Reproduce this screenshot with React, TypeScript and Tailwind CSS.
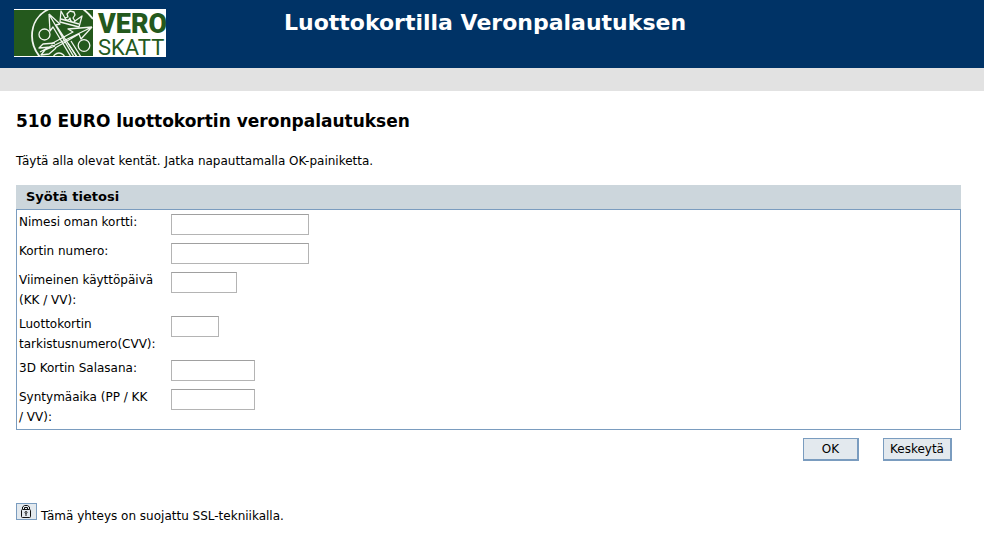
const fields = [
  { id: "name", lines: ["Nimesi oman kortti:"], width: "w-[138px]" },
  { id: "number", lines: ["Kortin numero:"], width: "w-[138px]" },
  { id: "expiry", lines: ["Viimeinen käyttöpäivä", "(KK / VV):"], width: "w-[66px]" },
  { id: "check", lines: ["Luottokortin", "tarkistusnumero(CVV):"], width: "w-12" },
  { id: "secure", lines: ["3D Kortin Salasana:"], width: "w-21" },
  { id: "birth", lines: ["Syntymäaika (PP / KK", "/ VV):"], width: "w-21" },
];

const Logo = () => {
  return (
    <svg width="152" height="48" viewBox="0 0 152 48" role="img" aria-label="Vero Skatt">
      <rect width="152" height="48" fill="#fff" />
      <rect y="1" width="79" height="46" fill="#24591d" />
      <svg x="0" y="1" width="79" height="46" viewBox="0 1 79 46">
        <g fill="none" stroke="#f1f5ef" strokeWidth="1.3" strokeLinejoin="round">
          <path d="M35 0C24 5 18 15 18 27C18 35 21 42 26 48" strokeWidth="1.8" />
          <path d="M69 0C73 3 76 6 79 10" strokeWidth="1.8" />
          <circle cx="30.5" cy="25.5" r="5.5" />
          <circle cx="70" cy="36.5" r="5.8" />
          <circle cx="45" cy="50" r="6" />
          <path d="M46 13L47 2L51 9L54 8L53 5L56 2L60 3L61 6L59 9L61 12L68 7L65 18Z" />
          <path d="M51 9C52 12 55 12 56 9C56 13 60 14 61 12M47 10L65 15" />
          {/* arrow pointing up left */}
          <path d="M35 5L46 15L42 16L63 48M35 5L36 22L39 18L57 48M36 7L60 48" />
          {/* arrow pointing right */}
          <path d="M78 18L54 20L59 23L37 35M78 18L67 30L65 25L41 39M76 19L39 37" />
          <path d="M41 34L29 35L25 39L37 38M42 39L35 45L27 46L31 41L41 37M39 36L26 43" />
          <path d="M54 34L63 48M57 32L67 48" />
        </g>
      </svg>
      <g fill="#24591d" fontFamily="Roboto, sans-serif">
        <text x="84" y="24" fontSize="27" fontWeight="900">
          VERO
        </text>
        <text x="84" y="46" fontSize="22" fontWeight="400">
          SKATT
        </text>
      </g>
    </svg>
  );
};

const LockIcon = () => {
  return (
    <svg width="21" height="17" viewBox="0 0 21 17" aria-hidden="true">
      <rect x="0.5" y="0.5" width="20" height="16" fill="#e3e9ee" stroke="#7a9cbf" />
      <g fill="none" stroke="#111">
        <path d="M6.5 6V4L8.5 2.500H11.500L13.500 4V6" />
        <rect x="5.5" y="6.5" width="9" height="8" rx="1" />
        <path d="M8.5 6V4.500H11.500V6" />
        <circle cx="10" cy="9.5" r="1" />
        <path d="M10 11V13" />
      </g>
    </svg>
  );
};

const App = () => {
  return (
    <div className="bg-white font-['DejaVu_Sans',sans-serif] text-xs leading-5 text-black">
      <header className="flex h-17 items-start bg-[#003366] pt-[9px] pl-3.5 text-white">
        <Logo />
        <p className="pl-[118px] text-[22px] leading-7 font-bold">Luottokortilla Veronpalautuksen</p>
      </header>
      <div className="h-[23px] bg-[#e2e2e2]" />
      <main className="pt-4 pr-[23px] pl-4">
        <h1 className="text-[17px] leading-7 font-bold">510 EURO luottokortin veronpalautuksen</h1>
        <p className="pt-4 pb-3.5">Täytä alla olevat kentät. Jatka napauttamalla OK-painiketta.</p>
        <form onSubmit={(e) => e.preventDefault()}>
          <h2 className="h-6 bg-[#ccd6dc] pl-2.5 text-[13px] leading-6 font-bold">Syötä tietosi</h2>
          <div className="border border-[#7a9cbf]">
            {fields.map((field) => (
              <div key={field.id} className="flex items-start pl-0.5">
                <label htmlFor={field.id} className="w-38 py-0.5 whitespace-nowrap">
                  {field.lines.map((line) => (
                    <span key={line} className="block">
                      {line}
                    </span>
                  ))}
                </label>
                <div className="flex py-1">
                  <input
                    id={field.id}
                    type="text"
                    readOnly
                    autoComplete="off"
                    className={`h-[21px] border border-[#b4b4b4] border-t-[#a0a0a0] bg-white px-1 ${field.width}`}
                  />
                </div>
              </div>
            ))}
          </div>
          <div className="flex justify-end gap-6 pt-2 pr-[9px]">
            <button
              type="button"
              className="h-[23px] w-14 border border-r-2 border-b-2 border-[#7a9cbf] bg-[#e3e9ee]"
            >
              OK
            </button>
            <button
              type="button"
              className="h-[23px] w-[69px] border border-r-2 border-b-2 border-[#7a9cbf] bg-[#e3e9ee]"
            >
              Keskeytä
            </button>
          </div>
        </form>
        <div className="flex items-start gap-1 pt-[42px]">
          <LockIcon />
          <p className="pt-[3px]">Tämä yhteys on suojattu SSL-tekniikalla.</p>
        </div>
      </main>
    </div>
  );
};

export default App;
